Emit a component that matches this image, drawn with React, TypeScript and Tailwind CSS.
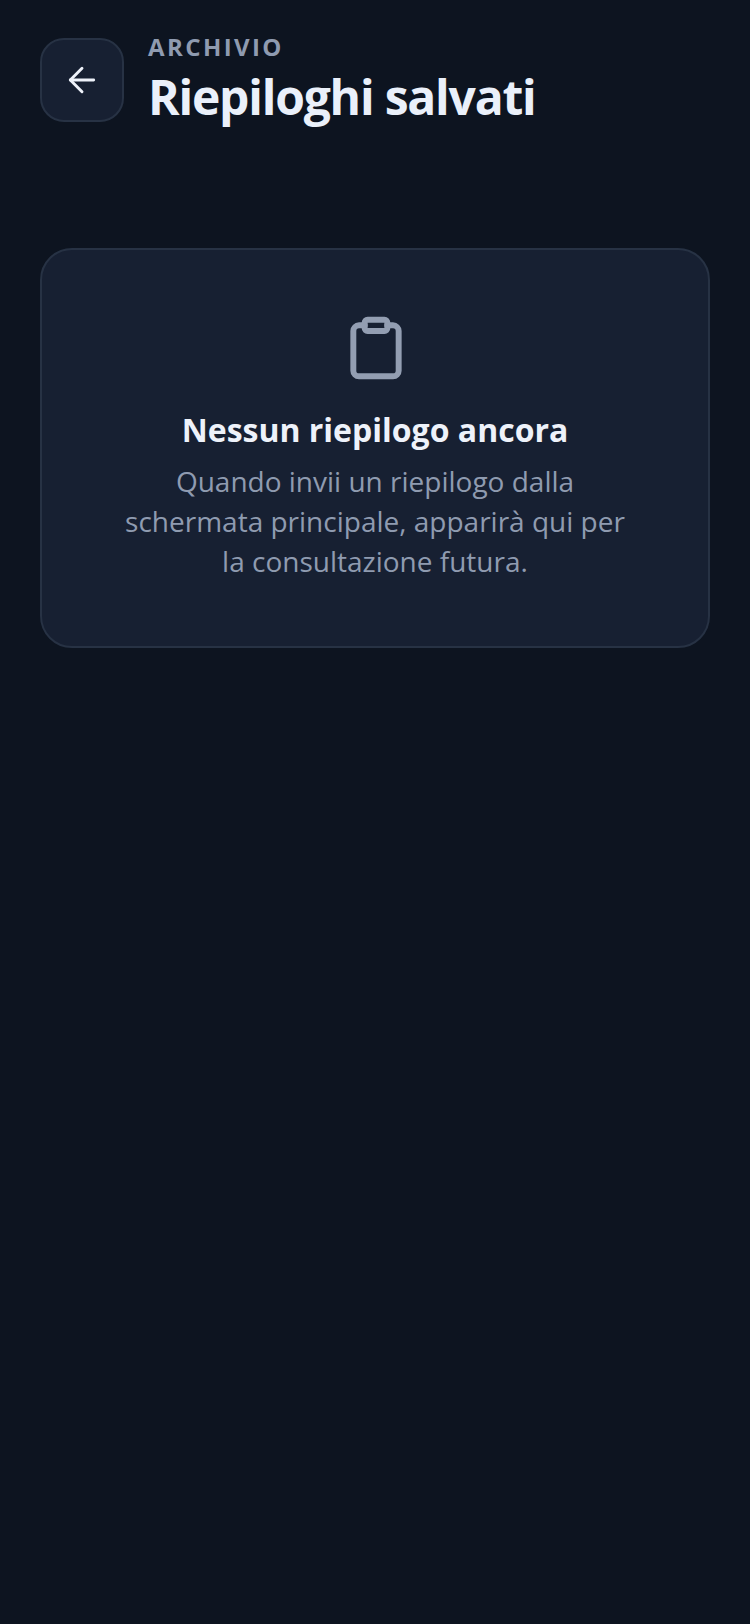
import { ArrowLeft } from "lucide-react";

export default function App() {
  return (
    <div className="min-h-[1624px] bg-[#0d1420] px-10 pt-[38px] font-['Open_Sans',sans-serif]">
      <header className="flex items-start gap-6">
        <button
          type="button"
          aria-label="Indietro"
          className="grid h-[84px] w-[84px] shrink-0 place-items-center rounded-3xl border-2 border-[#273244] bg-[#172032] text-[#eef2fa]"
        >
          <ArrowLeft className="h-10 w-10" strokeWidth={1.75} />
        </button>
        <div className="-mt-[7px]">
          <p className="text-[24px] leading-[32px] font-bold tracking-[0.1em] text-[#8f9bb0]">ARCHIVIO</p>
          <h1 className="mt-1 text-[48px] leading-[60px] font-bold tracking-[-0.025em] text-[#eaf0fa]">Riepiloghi salvati</h1>
        </div>
      </header>

      <section className="mt-[121px] flex h-[400px] flex-col items-center rounded-[32px] border-2 border-[#273244] bg-[#172032] px-20 pt-16 text-center">
        <svg className="ml-0.5 h-[68px] w-[68px] text-[#939eb2]" viewBox="0 0 24 24" fill="none" stroke="currentColor" strokeWidth={2.1} strokeLinecap="round" strokeLinejoin="round">
          <rect x="8" y="2" width="8" height="4" rx="1" ry="1" />
          <path d="M16 4h2a2 2 0 0 1 2 2v14a2 2 0 0 1-2 2H6a2 2 0 0 1-2-2V6a2 2 0 0 1 2-2h2" />
        </svg>
        <h2 className="mt-[26px] text-[32px] leading-[44px] font-bold text-[#eef2fa]">Nessun riepilogo ancora</h2>
        <p className="mt-[9px] text-[28px] leading-[40px] text-[#8f9bb0]">
          Quando invii un riepilogo dalla schermata principale, apparirà qui per la consultazione futura.
        </p>
      </section>
    </div>
  );
}
